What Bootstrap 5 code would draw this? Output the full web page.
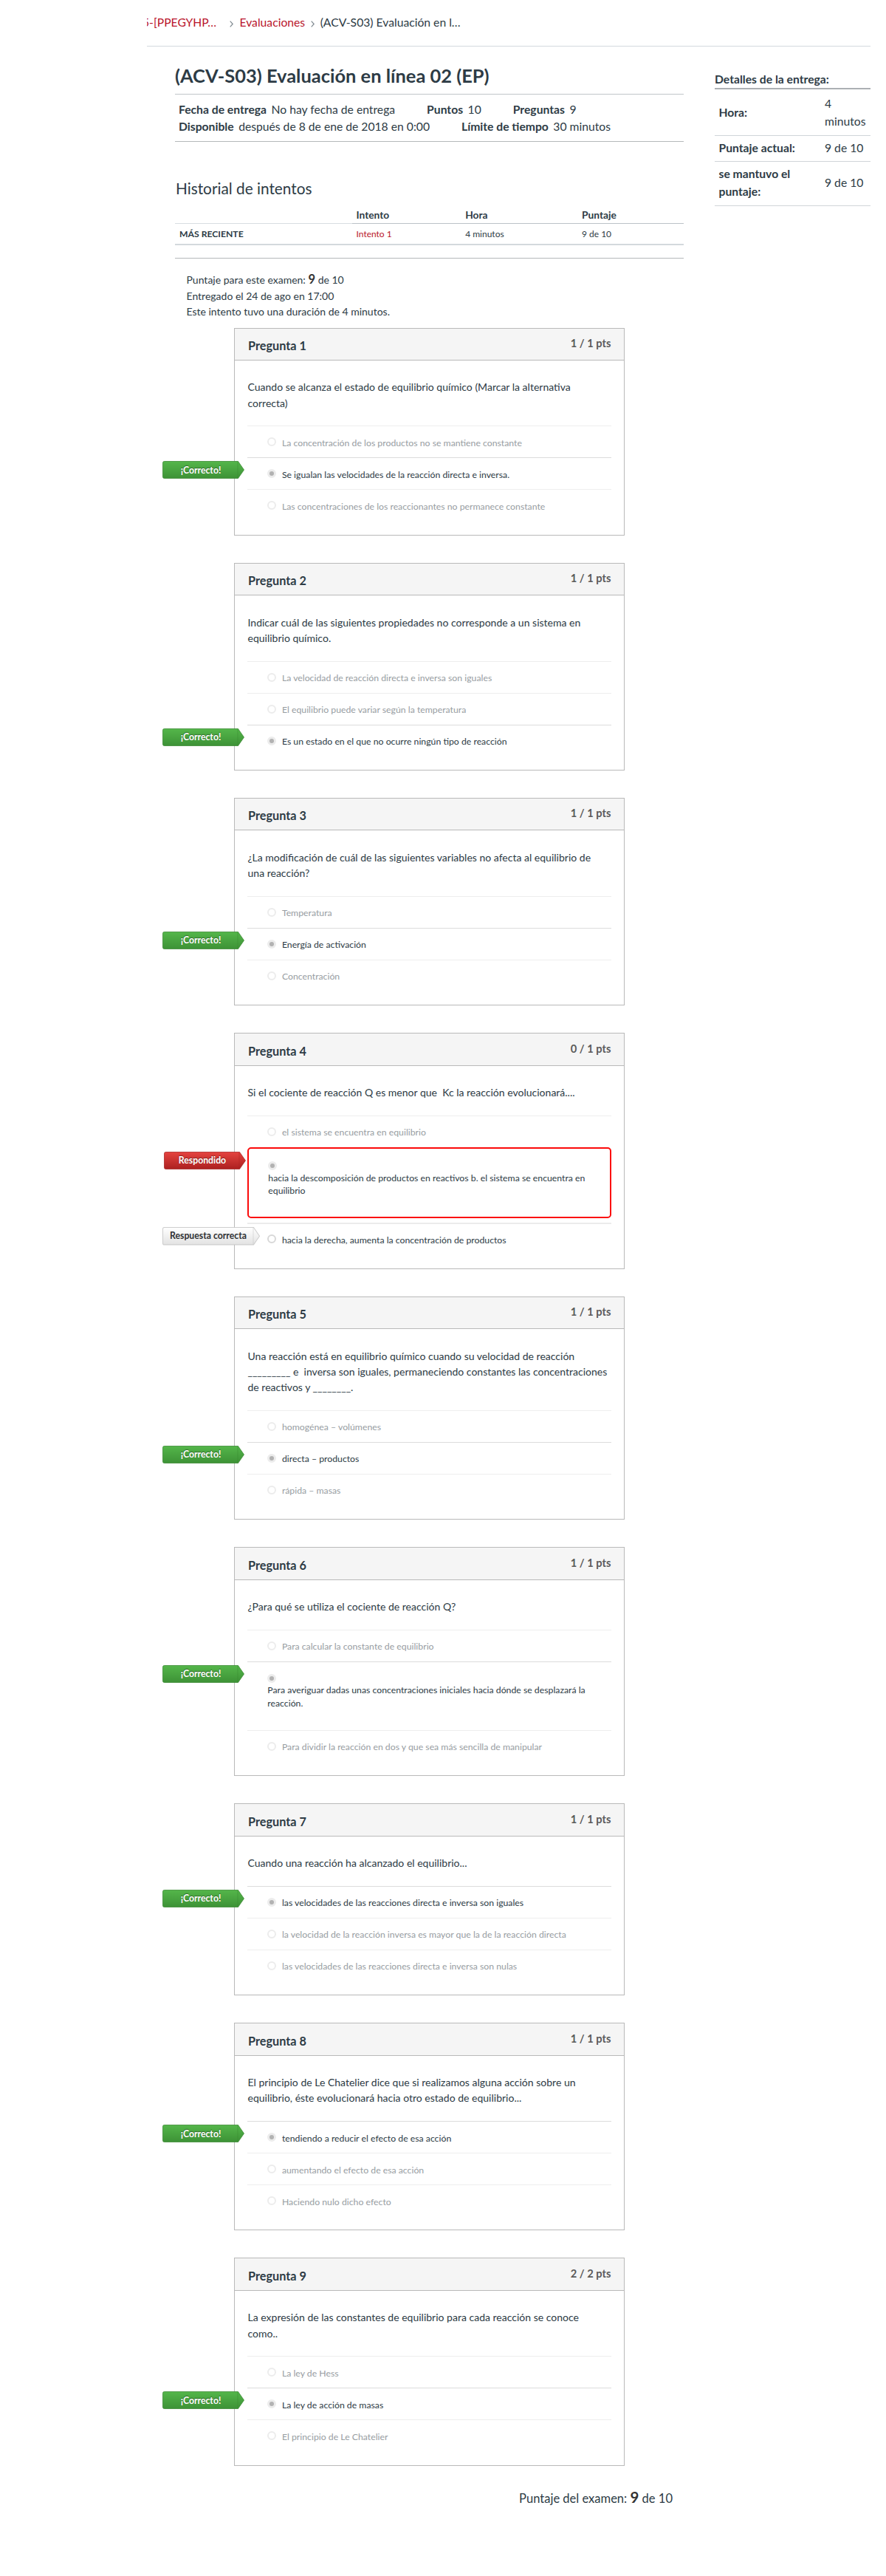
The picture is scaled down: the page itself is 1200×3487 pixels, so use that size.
<!DOCTYPE html>
<html lang="es">
<head>
    <meta charset="UTF-8">
    <meta name="viewport" content="width=device-width, initial-scale=1.0">
    <title>(ACV-S03) Evaluación en línea 02 (EP)</title>
    <link rel="stylesheet" href="https://cdn.jsdelivr.net/npm/bootstrap@5.3.0/dist/css/bootstrap.min.css">
    <style>
        body {
            font-family: Lato, "Liberation Sans", sans-serif;
            font-size: 15.7px;
            line-height: 23.8px;
            color: #2d3b45;
            background: #fff;
            min-height: 3487px;
        }
        a { color: #b9152b; text-decoration: none; }
        .page { width: 980px; margin-left: 199px; }

        /* Migas de pan */
        .crumbs { height: 63px; padding-top: 19.3px; border-bottom: 1px solid #d3d9de; white-space: nowrap; overflow: hidden; }
        .crumbs .first { margin-left: -6px; width: 102px; }
        .crumbs svg { width: 5px; height: 9px; margin: 9px 8px 0 7.5px; }
        .crumbs .first + svg { margin: 9px 8.5px 0 16px; }

        .main-col { width: 689px; margin-left: 38px; padding-top: 24px; }
        .quiz-title { font-size: 25.45px; line-height: 31px; font-weight: 700; margin: 0; padding-bottom: 9px; }
        .quiz-info { border-top: 1px solid #c1c5c8; border-bottom: 1px solid #b5b8ba; padding: 8.5px 5px 6.9px; }
        .quiz-info b { margin-right: 6.5px; }
        .quiz-info span { margin-right: 43px; }
        .history-title { font-size: 20.8px; line-height: 26px; font-weight: 400; margin: 50px 0 0 1px; }

        .history { font-size: 12px; line-height: 18px; margin: 14px 0 0; width: 100%; table-layout: fixed; }
        .history th, .history td { padding: 0 6px; }
        .history thead th { font-size: 13.75px; height: 21px; line-height: 17px; padding-bottom: 3px; border-bottom: 1px solid #bcc2c7; }
        .history thead th:first-child { border-color: #d8dde1; }
        .history tbody td, .history tbody th { height: 28.5px; border-bottom: 2px solid #d3d9dd; }
        .history tbody th { font-size: 12.2px; }
        .divider { border-top: 1px solid #b5b8ba; margin-top: 17px; }
        .score-lines { font-size: 14px; line-height: 21.4px; margin: 17.8px 0 11px 15.5px; }
        .score-lines b { font-size: 16.5px; color: #333; line-height: 1; }

        /* Detalles de la entrega */
        .side-col { width: 211px; margin-left: 42px; padding-top: 32.2px; }
        .side-col h2 { font-size: 15.7px; line-height: 24px; font-weight: 700; margin: 0; border-bottom: 2px solid #acb0b3; }
        .details { width: 100%; margin-top: 3.3px; }
        .details th, .details td { padding: 4.8px 5.5px 6px; vertical-align: middle; border-bottom: 1px solid #d0d5d9; }
        .details td { width: 67.5px; }

        /* Preguntas */
        .question { width: 529px; margin: 0 0 37.05px 80px; border: 1px solid #b9b9b9; padding-bottom: 18.3px; }
        .question-head { height: 43.5px; background: #f5f5f5; border-bottom: 1px solid #b9b9b9; padding: 0 17.5px 0 18px; }
        .question-head h3 { font-size: 16.25px; line-height: 20px; font-weight: 700; margin: 13.5px 0 0; }
        .question-head span { font-size: 14.7px; line-height: 20px; font-weight: 700; color: #5a5a5a; margin-top: 9.4px; }
        .question-text { font-size: 14.02px; line-height: 21.3px; padding: 25.3px 0 20.5px 17.5px; white-space: pre-line; }
        .answers { margin: 0 17px 0 17.3px; }
        .answer { position: relative; height: 43px; border-top: 1px solid #eee; padding: 13.4px 0 0 27px; font-size: 12.27px; line-height: 17.6px; gap: 7.6px; }
        .answer p { margin: 0; white-space: pre; }
        .answer.off p { color: #979da2; }
        .answer.picked { border-top-color: #dcdcdc; }
        .answer.tall { height: 93px; padding-top: 14.6px; }
        .answer.tall p { margin-top: 1.2px; }
        .answer.wrong { height: 96px; border: 2px solid #fb0a0a; border-radius: 5px; margin-bottom: 6.7px; padding: 16px 0 0 26px; }
        .answer.expected { border-top: 2px solid #ebebeb; padding-top: 12.4px; }
        .dot { flex: none; width: 12px; height: 12px; border: 2px solid #ececec; border-radius: 50%; margin-top: 1.6px; }
        .picked .dot, .wrong .dot { border: 3px solid #ececec; background: #b2b2b2; }
        .expected .dot { border-color: #d8d8d8; }

        /* Etiquetas que sobresalen del recuadro */
        .flag { position: absolute; left: -115.3px; top: 4px; width: 111px; height: 24px; }
        .flag svg { display: block; width: 100%; height: 100%; overflow: visible; }
        .flag span { position: absolute; left: 0; top: 2.4px; width: 104px; text-align: center; font-size: 12.25px; line-height: 20px; font-weight: 700; color: #fff; text-shadow: 0 -1px 1px rgba(0, 0, 0, .4); }
        .expected .flag { top: 3.5px; width: 132px; height: 24.5px; }
        .expected .flag span { width: 124px; color: #2f3133; text-shadow: none; }

        .final-score { font-size: 16.55px; line-height: 26px; margin: -6px 15px 0 0; }
        .final-score b { font-size: 20.5px; color: #333; line-height: 1; }
    </style>
</head>
<body>
    <svg width="0" height="0" class="d-block">
        <defs>
            <linearGradient id="gGreen" x2="0" y2="1"><stop offset="0" stop-color="#54b64a"/><stop offset="1" stop-color="#3d9236"/></linearGradient>
            <linearGradient id="gRed" x2="0" y2="1"><stop offset="0" stop-color="#e5433f"/><stop offset="1" stop-color="#ac2020"/></linearGradient>
            <linearGradient id="gGray" x2="0" y2="1"><stop offset="0" stop-color="#ffffff"/><stop offset="1" stop-color="#e2e2e2"/></linearGradient>
        </defs>
    </svg>
    <div class="page">
        <nav class="crumbs d-flex align-items-start">
            <a href="#" class="first">5-[PPEGYHP…</a>
            <svg viewBox="0 0 5 9" fill="none" stroke="#7d878e" stroke-width="1.2"><path d="M.7.7 4.2 4.5.7 8.3"/></svg>
            <a href="#">Evaluaciones</a>
            <svg viewBox="0 0 5 9" fill="none" stroke="#7d878e" stroke-width="1.2"><path d="M.7.7 4.2 4.5.7 8.3"/></svg>
            <span>(ACV-S03) Evaluación en l…</span>
        </nav>
        <div class="d-flex align-items-start">
            <main class="main-col">
                <h1 class="quiz-title">(ACV-S03) Evaluación en línea 02 (EP)</h1>
                <div class="quiz-info">
                    <div class="d-flex"><b>Fecha de entrega</b><span>No hay fecha de entrega</span><b>Puntos</b><span>10</span><b>Preguntas</b><span>9</span></div>
                    <div class="d-flex"><b>Disponible</b><span>después de 8 de ene de 2018 en 0:00</span><b>Límite de tiempo</b><span>30 minutos</span></div>
                </div>
                <h2 class="history-title">Historial de intentos</h2>
                <table class="history">
                    <colgroup><col style="width: 239.5px"><col style="width: 147.7px"><col style="width: 157.8px"><col></colgroup>
                    <thead>
                        <tr><th></th><th>Intento</th><th>Hora</th><th>Puntaje</th></tr>
                    </thead>
                    <tbody>
                        <tr><th>MÁS RECIENTE</th><td><a href="#">Intento 1</a></td><td>4 minutos</td><td>9 de 10</td></tr>
                    </tbody>
                </table>
                <div class="divider"></div>
                <div class="score-lines">
                    <div>Puntaje para este examen: <b>9</b> de 10</div>
                    <div>Entregado el 24 de ago en 17:00</div>
                    <div>Este intento tuvo una duración de 4 minutos.</div>
                </div>
                <div id="questions"></div>
                <div class="final-score text-end">Puntaje del examen: <b>9</b> de 10</div>
            </main>
            <aside class="side-col">
                <h2>Detalles de la entrega:</h2>
                <table class="details">
                    <tr><th>Hora:</th><td>4 minutos</td></tr>
                    <tr><th>Puntaje actual:</th><td>9 de 10</td></tr>
                    <tr><th>se mantuvo el puntaje:</th><td>9 de 10</td></tr>
                </table>
            </aside>
        </div>
    </div>

    <script src="https://cdn.jsdelivr.net/npm/bootstrap@5.3.0/dist/js/bootstrap.bundle.min.js"></script>
    <script>
        // Cada respuesta: [texto, estado]
        const questions = [
            { points: '1 / 1', text: 'Cuando se alcanza el estado de equilibrio químico (Marcar la alternativa\ncorrecta)', answers: [
                ['La concentración de los productos no se mantiene constante'],
                ['Se igualan las velocidades de la reacción directa e inversa.', 'picked'],
                ['Las concentraciones de los reaccionantes no permanece constante']] },
            { points: '1 / 1', text: 'Indicar cuál de las siguientes propiedades no corresponde a un sistema en\nequilibrio químico.', answers: [
                ['La velocidad de reacción directa e inversa son iguales'],
                ['El equilibrio puede variar según la temperatura'],
                ['Es un estado en el que no ocurre ningún tipo de reacción', 'picked']] },
            { points: '1 / 1', text: '¿La modificación de cuál de las siguientes variables no afecta al equilibrio de\nuna reacción?', answers: [
                ['Temperatura'],
                ['Energía de activación', 'picked'],
                ['Concentración']] },
            { points: '0 / 1', text: 'Si el cociente de reacción Q es menor que \u00a0Kc la reacción evolucionará....', answers: [
                ['el sistema se encuentra en equilibrio'],
                ['hacia la descomposición de productos en reactivos b. el sistema se encuentra en\nequilibrio', 'wrong'],
                ['hacia la derecha, aumenta la concentración de productos', 'expected']] },
            { points: '1 / 1', text: 'Una reacción está en equilibrio químico cuando su velocidad de reacción\n_________ e \u00a0inversa son iguales, permaneciendo constantes las concentraciones\nde reactivos y ________.', answers: [
                ['homogénea – volúmenes'],
                ['directa – productos', 'picked'],
                ['rápida – masas']] },
            { points: '1 / 1', text: '¿Para qué se utiliza el cociente de reacción Q?', answers: [
                ['Para calcular la constante de equilibrio'],
                ['Para averiguar dadas unas concentraciones iniciales hacia dónde se desplazará la\nreacción.', 'picked'],
                ['Para dividir la reacción en dos y que sea más sencilla de manipular']] },
            { points: '1 / 1', text: 'Cuando una reacción ha alcanzado el equilibrio...', answers: [
                ['las velocidades de las reacciones directa e inversa son iguales', 'picked'],
                ['la velocidad de la reacción inversa es mayor que la de la reacción directa'],
                ['las velocidades de las reacciones directa e inversa son nulas']] },
            { points: '1 / 1', text: 'El principio de Le Chatelier dice que si realizamos alguna acción sobre un\nequilibrio, éste evolucionará hacia otro estado de equilibrio...', answers: [
                ['tendiendo a reducir el efecto de esa acción', 'picked'],
                ['aumentando el efecto de esa acción'],
                ['Haciendo nulo dicho efecto']] },
            { points: '2 / 2', text: 'La expresión de las constantes de equilibrio para cada reacción se conoce\ncomo..', answers: [
                ['La ley de Hess'],
                ['La ley de acción de masas', 'picked'],
                ['El principio de Le Chatelier']] }
        ];

        const flags = {
            picked: { label: '¡Correcto!', width: 111, fill: 'gGreen', stroke: '#37872f' },
            wrong: { label: 'Respondido', width: 111, fill: 'gRed', stroke: '#a62222' },
            expected: { label: 'Respuesta correcta', width: 132, fill: 'gGray', stroke: '#bdbdbd' }
        };

        // Etiqueta con forma de flecha
        function renderFlag(state) {
            const flag = flags[state];
            if (!flag) return '';
            const w = flag.width;
            return `<div class="flag">
                <svg viewBox="0 0 ${w} 24" preserveAspectRatio="none">
                    <path d="M2.5 .5H${w - 8.5}L${w - .5} 12 ${w - 8.5} 23.5H2.5Q.5 23.5 .5 21.5V2.5Q.5 .5 2.5 .5Z" fill="url(#${flag.fill})" stroke="${flag.stroke}" stroke-opacity=".75"/>
                    <path d="M${w - 9} 1V23" stroke="${flag.stroke}" stroke-opacity=".45"/>
                </svg>
                <span>${flag.label}</span>
            </div>`;
        }

        function renderAnswer([text, state]) {
            const tall = text.includes('\n');
            return `<div class="answer d-flex ${tall ? 'tall flex-column gap-0' : ''} ${state || 'off'}">
                ${renderFlag(state)}
                <i class="dot"></i>
                <p>${text}</p>
            </div>`;
        }

        document.getElementById('questions').innerHTML = questions.map((q, i) => `
            <section class="question">
                <div class="question-head d-flex justify-content-between align-items-start">
                    <h3>Pregunta ${i + 1}</h3>
                    <span>${q.points} pts</span>
                </div>
                <div class="question-text">${q.text}</div>
                <div class="answers">${q.answers.map(renderAnswer).join('')}</div>
            </section>`).join('');
    </script>
</body>
</html>
